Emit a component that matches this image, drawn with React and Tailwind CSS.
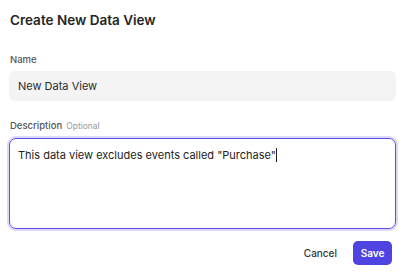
import React from "react";

export default function App() {
  return (
    <div className="w-[405px] h-[279px] bg-white flex flex-col px-[9px] text-[#2b2b2b]" style={{ fontFamily: "Inter, 'Open Sans', sans-serif" }}>
      <h1 className="mt-[10px] ml-[1px] text-[13.5px] leading-[20px] font-semibold text-[#252525]">Create New Data View</h1>
      <label className="mt-[23px] ml-[1px] text-[9.5px] leading-[14px] font-medium text-[#555]">Name</label>
      <div className="mt-[4px] h-[30px] w-[387px] rounded-[6px] bg-[#f4f4f4] flex items-center px-[9px] text-[11px] text-[#2b2b2b]">New Data View</div>
      <div className="mt-[18px] ml-[1px] flex items-baseline gap-[4px]">
        <span className="text-[9.5px] leading-[14px] font-medium text-[#555]">Description</span>
        <span className="text-[8.5px] leading-[14px] text-[#9a9a9a]">Optional</span>
      </div>
      <div className="mt-[5px] h-[91px] w-[387px] rounded-[7px] border-[1.5px] border-[#5b4fe6] shadow-[0_0_0_2px_#dcd9fb] px-[8px] pt-[8px] text-[11px] leading-[16px] text-[#222]">
        This data view excludes events called "Purchase"<span className="inline-block w-[1px] h-[14px] bg-[#222] align-middle -mt-[2px]"></span>
      </div>
      <div className="mt-[12px] flex justify-end items-center gap-[16px] pr-[4px]">
        <span className="text-[10px] font-medium text-[#333]">Cancel</span>
        <button className="h-[24px] w-[39px] rounded-[5px] bg-[#4f43e2] text-white text-[10px] font-semibold">Save</button>
      </div>
    </div>
  );
}
